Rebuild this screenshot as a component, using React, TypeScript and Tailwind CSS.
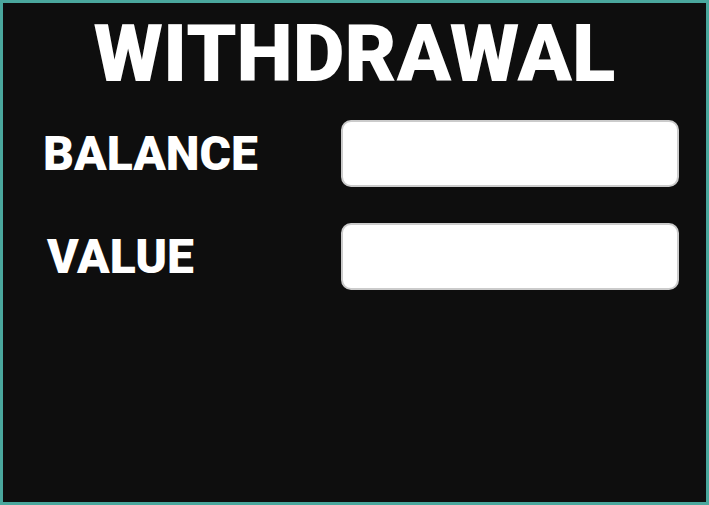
import React from 'react';

const labelFont = { fontFamily: 'Roboto, "Liberation Sans", sans-serif' };

function Field({ label, offset }: { label: string; offset: string }) {
  return (
    <div className="flex items-center">
      <div className={`w-[338px] ${offset} text-white font-black text-[48px] leading-none`} style={labelFont}>
        {label}
      </div>
      <input
        type="text"
        className="w-[338px] h-[67px] rounded-[10px] border-2 border-[#cbcbcb] bg-white outline-none"
      />
    </div>
  );
}

export default function App() {
  return (
    <div className="w-[709px] h-[505px] border-[3px] border-[#4aa79d] bg-[#0e0e0e] flex flex-col">
      {/* Title */}
      <h1
        className="mt-[11px] text-center text-white font-black text-[80px] leading-none"
        style={labelFont}
      >
        WITHDRAWAL
      </h1>

      {/* Fields */}
      <div className="mt-[26px] flex flex-col gap-[36px]">
        <Field label="BALANCE" offset="pl-[40px]" />
        <Field label="VALUE" offset="pl-[44px]" />
      </div>
    </div>
  );
}
